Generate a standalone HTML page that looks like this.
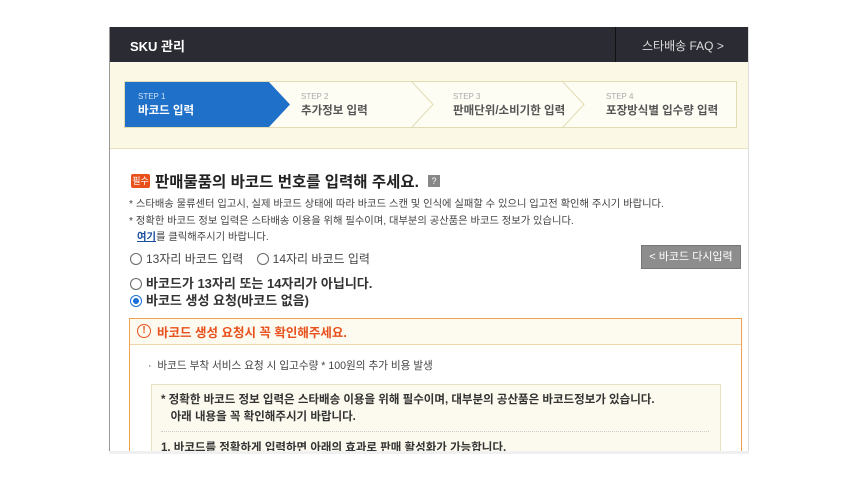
<!DOCTYPE html>
<html><head><meta charset="utf-8"><style>
*{margin:0;padding:0;box-sizing:border-box}
body{width:860px;height:480px;background:#fff;position:relative;overflow:hidden;font-family:"Liberation Sans","Noto Sans CJK KR",sans-serif;color:#333}
.a{position:absolute;white-space:nowrap}
.radio{display:inline-block;width:12px;height:12px;border:1px solid #666;border-radius:50%;vertical-align:-2px;margin-right:4px;background:#fff;position:relative}
.radio.on{border-color:#1a6fd8}
.radio.on:after{content:"";position:absolute;left:2px;top:2px;width:6px;height:6px;border-radius:50%;background:#1a6fd8}
</style></head><body>
<div class="a" style="left:109px;top:27px;width:640px;height:424px;border-left:1px solid #999;border-right:1px solid #ddd;overflow:hidden">
 <div class="a" style="left:0;top:0;width:640px;height:35px;background:#2b2b33"></div>
 <div class="a" style="left:505px;top:0;width:1px;height:35px;background:#111"></div>
 <div class="a" style="left:20px;top:9px;color:#fff;font-size:13px;font-weight:bold">SKU 관리</div>
 <div class="a" style="left:532px;top:10px;color:#ddd;font-size:12px">스타배송 FAQ &gt;</div>
 <div class="a" style="left:0;top:35px;width:640px;height:87px;background:#fbf8e6;border-bottom:1px solid #ebe3bd"></div>
 <div class="a" style="left:14px;top:54px;width:613px;height:47px;background:#fefdf4;border:1px solid #e2dcb4"></div>
 <svg class="a" style="left:14px;top:54px" width="613" height="47">
  <polygon points="1,1 145,1 166,23.5 145,46 1,46" fill="#1f70c8"/>
  <polyline points="288,1 309,23.5 288,46" fill="none" stroke="#e2dcb4"/>
  <polyline points="439,1 460,23.5 439,46" fill="none" stroke="#e2dcb4"/>
 </svg>
 <div class="a" style="left:28px;top:65px;color:#cfe0f5;font-size:8px">STEP 1</div>
 <div class="a" style="left:28px;top:75px;color:#fff;font-size:11.5px;font-weight:bold">바코드 입력</div>
 <div class="a" style="left:191px;top:65px;color:#aaa;font-size:8px">STEP 2</div>
 <div class="a" style="left:191px;top:75px;color:#555;font-size:11.5px;font-weight:bold">추가정보 입력</div>
 <div class="a" style="left:343px;top:65px;color:#aaa;font-size:8px">STEP 3</div>
 <div class="a" style="left:343px;top:75px;color:#555;font-size:11.5px;font-weight:bold">판매단위/소비기한 입력</div>
 <div class="a" style="left:496px;top:65px;color:#aaa;font-size:8px">STEP 4</div>
 <div class="a" style="left:496px;top:75px;color:#555;font-size:11.5px;font-weight:bold">포장방식별 입수량 입력</div>

 <div class="a" style="left:21px;top:147px;width:19px;height:14px;background:#e8501c;color:#fff;font-size:9px;text-align:center;line-height:14px;border-radius:2px">필수</div>
 <div class="a" style="left:45px;top:143px;font-size:15.5px;font-weight:bold;color:#222">판매물품의 바코드 번호를 입력해 주세요.</div>
 <div class="a" style="left:318px;top:148px;width:12px;height:12px;background:#888;color:#fff;font-size:9px;text-align:center;line-height:12px">?</div>
 <div class="a" style="left:19px;top:168px;font-size:10.3px;color:#444">* 스타배송 물류센터 입고시, 실제 바코드 상태에 따라 바코드 스캔 및 인식에 실패할 수 있으니 입고전 확인해 주시기 바랍니다.</div>
 <div class="a" style="left:19px;top:185px;font-size:10.3px;color:#444">* 정확한 바코드 정보 입력은 스타배송 이용을 위해 필수이며, 대부분의 공산품은 바코드 정보가 있습니다.</div>
 <div class="a" style="left:27px;top:201px;font-size:10.3px;color:#444"><b style="color:#1a4fa0;text-decoration:underline">여기</b>를 클릭해주시기 바랍니다.</div>
 <div class="a" style="left:20px;top:223px;font-size:12px;color:#444"><span class="radio"></span>13자리 바코드 입력 &nbsp;&nbsp;&nbsp;<span class="radio"></span>14자리 바코드 입력</div>
 <div class="a" style="left:531px;top:218px;width:100px;height:24px;background:#8d8d8d;border:1px solid #777;color:#fff;font-size:11px;line-height:22px;text-align:center">&lt; 바코드 다시입력</div>
 <div class="a" style="left:20px;top:246px;font-size:13px;font-weight:bold;color:#333"><span class="radio"></span>바코드가 13자리 또는 14자리가 아닙니다.</div>
 <div class="a" style="left:20px;top:263px;font-size:13px;font-weight:bold;color:#333"><span class="radio on"></span>바코드 생성 요청(바코드 없음)</div>

 <div class="a" style="left:19px;top:291px;width:613px;height:140px;border:1px solid #f0a050;background:#fff"></div>
 <div class="a" style="left:20px;top:292px;width:611px;height:26px;background:#fdfaf0;border-bottom:1px solid #f3d5a8"></div>
 <div class="a" style="left:27px;top:297px;width:14px;height:14px;border:1.5px solid #e8501c;border-radius:50%;color:#e8501c;font-size:10px;font-weight:bold;text-align:center;line-height:12px">!</div>
 <div class="a" style="left:47px;top:295px;font-size:12.5px;font-weight:bold;color:#e8501c">바코드 생성 요청시 꼭 확인해주세요.</div>
 <div class="a" style="left:38px;top:331px;font-size:10.6px;color:#444">· &nbsp;바코드 부착 서비스 요청 시 입고수량 * 100원의 추가 비용 발생</div>
 <div class="a" style="left:41px;top:357px;width:570px;height:80px;background:#fcfaee;border:1px solid #e6e0c4"></div>
 <div class="a" style="left:51px;top:365px;font-size:11.5px;font-weight:bold;color:#333;line-height:17px">* 정확한 바코드 정보 입력은 스타배송 이용을 위해 필수이며, 대부분의 공산품은 바코드정보가 있습니다.<br>&nbsp;&nbsp;&nbsp;아래 내용을 꼭 확인해주시기 바랍니다.</div>
 <div class="a" style="left:51px;top:404px;width:548px;border-top:1px dotted #ccc"></div>
 <div class="a" style="left:51px;top:412px;font-size:11.5px;font-weight:bold;color:#333">1. 바코드를 정확하게 입력하면 아래의 효과로 판매 활성화가 가능합니다.</div>
</div>
<div class="a" style="left:109px;top:451px;width:640px;height:3px;background:#f0f0f0"></div>
</body></html>
